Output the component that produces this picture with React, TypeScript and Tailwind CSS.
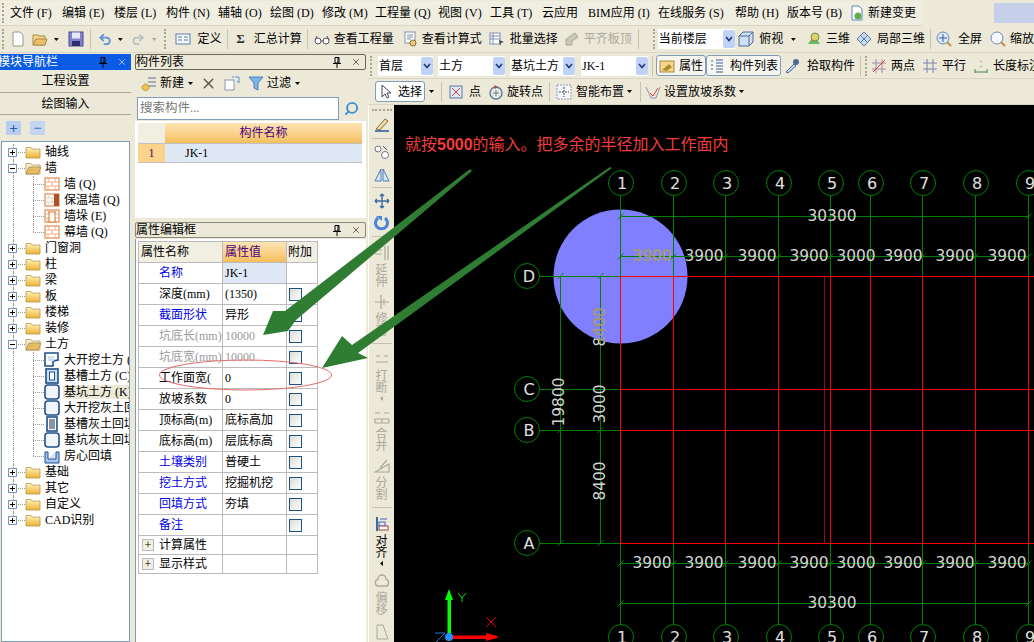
import type { ReactNode } from 'react';
import { Undo2, Redo2, Search, X } from 'lucide-react';

const GRID_X = [620, 673, 725, 778, 830, 870, 922, 975, 1028];
const GRID_Y = [
  { label: 'D', y: 276 },
  { label: 'C', y: 389 },
  { label: 'B', y: 430 },
  { label: 'A', y: 543 },
];
const DIM_X = [
  { t: '3900', x: 652 },
  { t: '3900', x: 704 },
  { t: '3900', x: 757 },
  { t: '3900', x: 809 },
  { t: '3000', x: 856 },
  { t: '3900', x: 903 },
  { t: '3900', x: 955 },
  { t: '3900', x: 1007 },
];

const PROPS = [
  { name: '名称', value: 'JK-1', blue: true, check: false, picked: true },
  { name: '深度(mm)', value: '(1350)', check: true },
  { name: '截面形状', value: '异形', blue: true, check: true },
  { name: '坑底长(mm)', value: '10000', gray: true, check: true },
  { name: '坑底宽(mm)', value: '10000', gray: true, check: true },
  { name: '工作面宽(', value: '0', check: true },
  { name: '放坡系数', value: '0', check: true },
  { name: '顶标高(m)', value: '底标高加', check: true },
  { name: '底标高(m)', value: '层底标高', check: true },
  { name: '土壤类别', value: '普硬土', blue: true, check: true },
  { name: '挖土方式', value: '挖掘机挖', blue: true, check: true },
  { name: '回填方式', value: '夯填', blue: true, check: true },
  { name: '备注', value: '', blue: true, check: true },
];

const MENUS = [
  ['文件 (F)', 'w-[52px]'],
  ['编辑 (E)', 'w-[52px]'],
  ['楼层 (L)', 'w-[52px]'],
  ['构件 (N)', 'w-[52px]'],
  ['辅轴 (O)', 'w-[52px]'],
  ['绘图 (D)', 'w-[52px]'],
  ['修改 (M)', 'w-[53px]'],
  ['工程量 (Q)', 'w-[63px]'],
  ['视图 (V)', 'w-[52px]'],
  ['工具 (T)', 'w-[52px]'],
  ['云应用', 'w-[46px]'],
  ['BIM应用 (I)', 'w-[70px]'],
  ['在线服务 (S)', 'w-[77px]'],
  ['帮助 (H)', 'w-[52px]'],
  ['版本号 (B)', 'w-[63px]'],
];

function Caret({ className = '', gray = false }: { className?: string; gray?: boolean }) {
  return (
    <svg width="5" height="3" viewBox="0 0 5 3" className={className}>
      <path d="M0 0H5L2.5 3Z" fill={gray ? '#aaa89c' : '#000'} />
    </svg>
  );
}

function Grip({ className = '' }: { className?: string }) {
  return <div className={`h-[20px] w-[2px] border-l-2 border-dotted border-[#a8a592] ${className}`} />;
}

function Sep({ className = '' }: { className?: string }) {
  return <div className={`h-[20px] w-[1px] bg-[#c5c2b0] ${className}`} />;
}

function HLine({ className = '' }: { className?: string }) {
  return <div className={`h-[1px] w-[20px] bg-[#c5c2b0] ${className}`} />;
}

function Label({ children, className = '' }: { children: ReactNode; className?: string }) {
  return <span className={`whitespace-nowrap ${className}`}>{children}</span>;
}

function Ico({ children, className = '' }: { children: ReactNode; className?: string }) {
  return (
    <svg width="16" height="16" viewBox="0 0 16 16" className={`shrink-0 ${className}`}>
      {children}
    </svg>
  );
}

function FolderIcon({ open = false }: { open?: boolean }) {
  return (
    <svg width="16" height="13" viewBox="0 0 16 13" className="shrink-0">
      <defs>
        <linearGradient id="folderFill" x1="0" y1="0" x2="0" y2="1">
          <stop offset="0" stopColor="#fff4c0" />
          <stop offset="1" stopColor="#eeb030" />
        </linearGradient>
      </defs>
      <path d="M1 3V1.5H6L7 3H15V12H1Z" fill={open ? '#f5efd8' : 'url(#folderFill)'} stroke="#b89a4c" strokeWidth="0.8" />
      {open && <path d="M1 12L4 5H16L13 12Z" fill="#e8bc60" stroke="#a88a4c" strokeWidth="0.8" />}
    </svg>
  );
}

function WallIcon({ kind = 0 }: { kind?: number }) {
  return (
    <Ico>
      <rect x="1" y="2" width="14" height="12" fill="#fff" stroke="#d9762c" />
      <path d="M1 6H15M1 10H15M5 2V6M11 2V6M8 6V10M4 10V14M11 10V14" stroke={kind === 1 ? '#e4c0b0' : '#eda070'} strokeWidth="0.8" />
      {kind === 1 && <rect x="10" y="2" width="5" height="12" fill="#b0502a" />}
      {kind === 2 && <rect x="5" y="4" width="6" height="10" fill="#fff" stroke="#d9762c" />}
    </Ico>
  );
}

function PitIcon({ kind }: { kind: number }) {
  return (
    <Ico>
      {kind === 0 && (
        <>
          <path d="M1 1H14V8L9 9V14H1Z" fill="#fff" stroke="#1d4f91" strokeWidth="1.6" />
          <rect x="4" y="4" width="6" height="5" fill="#cfe0f5" />
        </>
      )}
      {kind === 1 && (
        <>
          <rect x="2" y="1" width="12" height="14" fill="#cfe0f5" stroke="#1d4f91" strokeWidth="1.6" />
          <rect x="5.5" y="4" width="5" height="8" fill="#fff" stroke="#1d4f91" />
        </>
      )}
      {kind === 2 && <rect x="1" y="1" width="14" height="14" rx="3" fill="#f2f6fc" stroke="#1d4f91" strokeWidth="1.6" />}
      {kind === 3 && (
        <>
          <rect x="3" y="1" width="10" height="14" fill="#fff" stroke="#1d4f91" strokeWidth="1.6" />
          <rect x="5" y="3" width="6" height="10" fill="#8a94a8" />
        </>
      )}
      {kind === 4 && (
        <>
          <path d="M1 4H4V11H12V4H15V15H1Z" fill="#a9c4ec" stroke="#1d4f91" />
          <path d="M5 10L11 4V10Z" fill="#d8e4f5" />
        </>
      )}
    </Ico>
  );
}

function TreeBox({ minus = false }: { minus?: boolean }) {
  return (
    <div className="relative flex h-[9px] w-[9px] items-center justify-center border border-[#7a96b8] bg-white">
      <div className="h-[1px] w-[5px] bg-black" />
      {!minus && <div className="absolute h-[5px] w-[1px] bg-black" />}
    </div>
  );
}

function TreeFolder({ text, open = false, last = false }: { text: string; open?: boolean; last?: boolean }) {
  return (
    <div className="flex h-[16px] items-center">
      <div className="relative flex h-full w-[23px] shrink-0 items-center">
        <div className={`absolute left-[11px] top-0 border-l border-dotted border-[#999] ${last ? 'h-[8px]' : 'h-[16px]'}`} />
        <div className="absolute left-[16px] w-[7px] border-t border-dotted border-[#999]" />
        <div className="absolute left-[6px]">
          <TreeBox minus={open} />
        </div>
      </div>
      <FolderIcon open={open} />
      <Label className="ml-[4px]">{text}</Label>
    </div>
  );
}

function TreeLeaf({ text, icon, last = false, picked = false }: { text: string; icon: ReactNode; last?: boolean; picked?: boolean }) {
  return (
    <div className="flex h-[16px] items-center">
      <div className="relative h-full w-[42px] shrink-0">
        <div className="absolute left-[11px] top-0 h-[16px] border-l border-dotted border-[#999]" />
        <div className={`absolute left-[31px] top-0 border-l border-dotted border-[#999] ${last ? 'h-[8px]' : 'h-[16px]'}`} />
        <div className="absolute left-[31px] top-[8px] w-[11px] border-t border-dotted border-[#999]" />
      </div>
      {icon}
      <Label className={`ml-[3px] pl-[1px] pr-[20px] ${picked ? 'bg-[#ece9d8]' : ''}`}>{text}</Label>
    </div>
  );
}

function PanelControls() {
  return (
    <div className="ml-auto flex items-center gap-[9px]">
      <svg width="10" height="11" viewBox="0 0 10 11">
        <path d="M3 .5H7V6H3ZM6 .5V6M1 6.5H9M5 7V11" stroke="#000" fill="none" />
      </svg>
      <X size={10} strokeWidth={1.4} />
    </div>
  );
}

function Select({ text, className }: { text: string; className: string }) {
  return (
    <div className={`flex h-[20px] items-center justify-between bg-white pl-[1px] ${className}`}>
      <Label>{text}</Label>
      <div className="flex h-[18px] w-[12px] items-center justify-center rounded-[2px] bg-[#c0d2f7]">
        <svg width="8" height="6" viewBox="0 0 8 6">
          <path d="M1 1L4 4.5L7 1" stroke="#1c3c78" strokeWidth="1.6" fill="none" />
        </svg>
      </div>
    </div>
  );
}

function VertTool({ icon, text, gray = true, caret = false, className = '' }: { icon: ReactNode; text?: string; gray?: boolean; caret?: boolean; className?: string }) {
  return (
    <div className={`flex flex-col items-center ${className}`}>
      {icon}
      {text && (
        <div className={`mt-[3px] flex flex-col text-[12px] leading-[12px] ${gray ? 'text-[#aaa89c]' : 'text-black'}`}>
          {text.split('').map((c) => (
            <span key={c}>{c}</span>
          ))}
        </div>
      )}
      {caret && <Caret className="mt-[3px] rotate-90" gray={gray} />}
    </div>
  );
}

function Canvas() {
  const txt = { fontFamily: 'DejaVu Sans, sans-serif', fontSize: 15.4 };
  return (
    <svg width="640" height="537" viewBox="394 105 640 537" className="block bg-black">
      <defs>
        <clipPath id="spot">
          <circle cx="620.5" cy="276.5" r="67" />
        </clipPath>
      </defs>
      <circle cx="620.5" cy="276.5" r="67" fill="#8080ff" />

      {/* axis lines */}
      {GRID_X.map((x) => (
        <g key={x}>
          <line x1={x + 0.5} y1={196} x2={x + 0.5} y2={276} stroke="#008000" />
          <line x1={x + 0.5} y1={543} x2={x + 0.5} y2={624} stroke="#008000" />
          <line x1={x + 0.5} y1={276} x2={x + 0.5} y2={543} stroke="#ff0000" />
        </g>
      ))}
      <line x1="824.5" y1="276" x2="824.5" y2="543" stroke="#8a1010" />
      {GRID_Y.map(({ y }) => (
        <g key={y}>
          <line x1="540" y1={y + 0.5} x2="620" y2={y + 0.5} stroke="#008000" />
          <line x1="620" y1={y + 0.5} x2="1034" y2={y + 0.5} stroke="#ff0000" />
        </g>
      ))}

      {/* dimension lines */}
      {[560.5, 600.5].map((x) => (
        <g key={x} stroke="#008000">
          <line x1={x} y1="276" x2={x} y2="543" />
          <path d={`M${x - 3} 279L${x + 3} 273M${x - 3} 546L${x + 3} 540M${x - 3} 433L${x + 3} 427`} />
        </g>
      ))}
      {[216.5, 256.5, 563.5, 603.5].map((y) => (
        <g key={y} stroke="#008000">
          <line x1="620" y1={y} x2="1028" y2={y} />
          {(y === 216.5 || y === 603.5 ? [620.5, 1028.5] : GRID_X.map((x) => x + 0.5)).map((x) => (
            <path key={x} d={`M${x - 3} ${y + 3}L${x + 3} ${y - 3}`} />
          ))}
        </g>
      ))}

      {/* numbers */}
      <g fill="#d4d4d4" style={txt} textAnchor="middle" dominantBaseline="central">
        {DIM_X.map((d) => (
          <g key={d.x}>
            <text x={d.x} y={256}>{d.t}</text>
            <text x={d.x} y={563}>{d.t}</text>
          </g>
        ))}
        <text x="832" y="216">30300</text>
        <text x="832" y="603">30300</text>
        <text transform="translate(559 402) rotate(-90)">19800</text>
        <text transform="translate(600 404) rotate(-90)">3000</text>
        <text transform="translate(600 481) rotate(-90)">8400</text>
        <text transform="translate(600 327) rotate(-90)">8400</text>
      </g>
      <g fill="#98905c" style={txt} textAnchor="middle" dominantBaseline="central" clipPath="url(#spot)">
        <text x={652} y={256}>3900</text>
        <text transform="translate(600 327) rotate(-90)">8400</text>
      </g>

      {/* axis bubbles */}
      {GRID_X.map((x, i) => (
        <g key={x}>
          <circle cx={x + 1} cy="183" r="12.5" fill="none" stroke="#008000" />
          <circle cx={x + 1} cy="637" r="12.5" fill="none" stroke="#008000" />
          <g fill="#e0e0e0" style={{ fontFamily: 'DejaVu Sans, sans-serif', fontSize: 16 }} textAnchor="middle" dominantBaseline="central">
            <text x={x + 2} y="183">{i + 1}</text>
            <text x={x + 2} y="637">{i + 1}</text>
          </g>
        </g>
      ))}
      {GRID_Y.map(({ label, y }) => (
        <g key={label}>
          <circle cx="527" cy={y} r="12.5" fill="none" stroke="#008000" />
          <text x="529" y={y} fill="#e0e0e0" style={{ fontFamily: 'DejaVu Sans, sans-serif', fontSize: 16 }} textAnchor="middle" dominantBaseline="central">
            {label}
          </text>
        </g>
      ))}

      {/* coordinate gizmo */}
      <path d="M447.5 637V600H445L449 589L453 600H451V637Z" fill="#00ff00" />
      <path d="M449 635.5H486V633L497 636L498 637L497 638L486 641V639H449Z" fill="#ff0000" />
      <circle cx="449" cy="637" r="4" fill="#1e90ff" />
      <path d="M458 593L462 598L466 593M462 598V602" stroke="#00e000" fill="none" />
      <path d="M486 617L496 627M496 617L486 627" stroke="#e00000" fill="none" />
      <path d="M435 633H445L436 642" stroke="#1e78e0" fill="none" />
    </svg>
  );
}

export default function App() {
  return (
    <div className="relative h-[642px] w-[1034px] overflow-hidden bg-[#ece9d8] font-['Liberation_Serif','Noto_Sans_CJK_SC',sans-serif] text-[12px] leading-[14px] text-black">
      {/* menu bar */}
      <div className="flex h-[26px] items-center">
        <div className="flex h-[25px] w-[922px] items-center border-b border-[#d8d5c4] bg-[#f0eee0] pl-[2px]">
          <Grip />
          <div className="ml-[6px] flex">
            {MENUS.map(([m, w]) => (
              <Label key={m} className={w}>{m}</Label>
            ))}
          </div>
          <Ico className="ml-[-1px]">
            <path d="M3 1H10L13 4V15H3Z" fill="#fff" stroke="#5a86c0" />
            <circle cx="9" cy="11" r="3.5" fill="#5cb04a" />
          </Ico>
          <Label className="ml-[3px]">新建变更</Label>
        </div>
        <div className="ml-auto mr-0 h-[20px] w-[40px] bg-[#c6cfea]" />
      </div>

      {/* standard toolbar */}
      <div className="flex h-[27px] items-center border-b border-[#d8d5c4] pl-[2px]">
        <Grip />
        <Ico className="ml-[6px]">
          <path d="M3 1H10L13 4V15H3Z" fill="#fff" stroke="#9a9a8c" />
        </Ico>
        <Ico className="ml-[6px]">
          <path d="M1 14V4H6L7 5H13V14Z" fill="#f4d68a" stroke="#a88a4c" />
          <path d="M1 14L4 8H15L13 14Z" fill="#ecc066" stroke="#a88a4c" />
        </Ico>
        <Caret className="ml-[6px]" />
        <Ico className="ml-[9px]">
          <rect x="1" y="1" width="14" height="14" fill="#7f82c8" stroke="#4c4f94" />
          <rect x="4" y="1.5" width="8" height="6" fill="#e8e8f4" />
          <rect x="4" y="10" width="8" height="5" fill="#2c2f6c" />
        </Ico>
        <Sep className="ml-[6px]" />
        <Undo2 size={15} strokeWidth={3} className="ml-[7px] text-[#5c8fd6]" />
        <Caret className="ml-[6px]" />
        <Redo2 size={15} strokeWidth={3} className="ml-[8px] text-[#b8c0c0]" />
        <Caret gray className="ml-[7px]" />
        <Grip className="ml-[8px]" />
        <Ico className="ml-[9px]">
          <rect x="1" y="3" width="14" height="10" fill="#f4f7fc" stroke="#5a7aa8" />
          <path d="M3 6H7M3 9H7M9 6H13M9 9H13" stroke="#5a7aa8" />
        </Ico>
        <Label className="ml-[6px]">定义</Label>
        <Sep className="ml-[6px]" />
        <span className="ml-[8px] w-[10px] text-[13px] font-bold text-[#333]">Σ</span>
        <Label className="ml-[8px]">汇总计算</Label>
        <Sep className="ml-[5px]" />
        <Ico className="ml-[6px]">
          <circle cx="4" cy="10" r="3" fill="#fff" stroke="#555" />
          <circle cx="12" cy="10" r="3" fill="#fff" stroke="#555" />
          <path d="M7 10H9M1 9L3 5M15 9L13 5" stroke="#555" fill="none" />
        </Ico>
        <Label className="ml-[4px]">查看工程量</Label>
        <Ico className="ml-[8px]">
          <rect x="3" y="1" width="10" height="11" fill="#fff" stroke="#8090a8" />
          <path d="M5 4H11M5 6H11M5 8H9" stroke="#8090a8" />
          <circle cx="11" cy="12" r="3" fill="#e8d080" stroke="#8a7030" />
        </Ico>
        <Label className="ml-[4px]">查看计算式</Label>
        <Ico className="ml-[7px]">
          <rect x="1" y="2" width="10" height="11" fill="#fff" stroke="#7f8db0" />
          <path d="M1 5H11M1 8H11M4 2V13" stroke="#7f8db0" />
          <path d="M10 9L15 11L12 12L11 15Z" fill="#445" />
        </Ico>
        <Label className="ml-[5px]">批量选择</Label>
        <Ico className="ml-[6px]">
          <path d="M2 14V8L11 2L14 6L8 10V14Z" fill="#c8c6b8" stroke="#aaa89c" />
        </Ico>
        <Label className="ml-[4px] text-[#aaa89c]">平齐板顶</Label>
        <Sep className="ml-[6px]" />
        <Grip className="ml-[14px]" />
        <Select text="当前楼层" className="ml-[3px] w-[82px]" />
        <Ico className="ml-[3px]">
          <path d="M1 5L5 1H15V11L11 15H1Z" fill="#cfe0f4" stroke="#4a6a94" />
          <path d="M1 5H11V15M11 5L15 1" stroke="#4a6a94" fill="none" />
        </Ico>
        <Label className="ml-[5px]">俯视</Label>
        <Caret className="ml-[8px]" />
        <Ico className="ml-[10px]">
          <path d="M2 13L8 4L14 13Z" fill="#6cb860" />
          <circle cx="9" cy="6" r="4" fill="#e0d070" stroke="#7a8a50" />
        </Ico>
        <Label className="ml-[4px]">三维</Label>
        <Ico className="ml-[6px]">
          <path d="M8 1L15 8L8 15L1 8Z" fill="#c6d8f0" stroke="#5a7aa8" />
          <path d="M5 5L11 11M11 5L5 11" stroke="#5a7aa8" />
        </Ico>
        <Label className="ml-[5px]">局部三维</Label>
        <Sep className="ml-[5px]" />
        <Ico className="ml-[5px]">
          <circle cx="7" cy="7" r="6" fill="#dbe7f7" stroke="#6a8ab8" />
          <path d="M7 3V11M3 7H11" stroke="#3a5a94" />
          <path d="M11 11L15 15" stroke="#c09040" strokeWidth="2" />
        </Ico>
        <Label className="ml-[6px]">全屏</Label>
        <Ico className="ml-[8px]">
          <circle cx="7" cy="7" r="6" fill="#f4f7fc" stroke="#6a8ab8" />
          <path d="M11 11L15 15" stroke="#c09040" strokeWidth="2" />
        </Ico>
        <Label className="ml-[4px]">缩放</Label>
      </div>

      <div className="flex h-[589px]">
        {/* module navigator */}
        <div className="flex w-[131px] shrink-0 flex-col">
          <div className="mt-[1px] flex h-[16px] shrink-0 items-center bg-[#0a5ce6] pr-[4px] text-white">
            <span className="ml-[-2px] whitespace-nowrap text-[12px]">模块导航栏</span>
            <PanelControls />
          </div>
          <div className="flex h-[23px] shrink-0 items-center justify-center border-b border-[#aca899]">工程设置</div>
          <div className="flex h-[22px] shrink-0 items-center justify-center border-b border-[#aca899]">绘图输入</div>
          <div className="flex h-[26px] shrink-0 items-center gap-[9px] pl-[6px]">
            <div className="flex h-[14px] w-[15px] items-center justify-center bg-[#b9cdf0] text-[15px] font-bold text-[#1f5fb4]">+</div>
            <div className="flex h-[14px] w-[15px] items-center justify-center bg-[#c5d5f0] text-[15px] font-bold text-[#4d7dbd]">−</div>
          </div>
          <div className="ml-[1px] mr-[1px] flex-1 overflow-hidden border border-[#7f9db9] bg-white pt-[2px]">
            <TreeFolder text="轴线" />
            <TreeFolder text="墙" open />
            <TreeLeaf text="墙 (Q)" icon={<WallIcon />} />
            <TreeLeaf text="保温墙 (Q)" icon={<WallIcon kind={1} />} />
            <TreeLeaf text="墙垛 (E)" icon={<WallIcon kind={2} />} />
            <TreeLeaf text="幕墙 (Q)" icon={<WallIcon />} last />
            <TreeFolder text="门窗洞" />
            <TreeFolder text="柱" />
            <TreeFolder text="梁" />
            <TreeFolder text="板" />
            <TreeFolder text="楼梯" />
            <TreeFolder text="装修" />
            <TreeFolder text="土方" open />
            <TreeLeaf text="大开挖土方 (W)" icon={<PitIcon kind={0} />} />
            <TreeLeaf text="基槽土方 (C)" icon={<PitIcon kind={1} />} />
            <TreeLeaf text="基坑土方 (K)" icon={<PitIcon kind={2} />} picked />
            <TreeLeaf text="大开挖灰土回填" icon={<PitIcon kind={2} />} />
            <TreeLeaf text="基槽灰土回填" icon={<PitIcon kind={3} />} />
            <TreeLeaf text="基坑灰土回填" icon={<PitIcon kind={2} />} />
            <TreeLeaf text="房心回填" icon={<PitIcon kind={4} />} last />
            <TreeFolder text="基础" />
            <TreeFolder text="其它" />
            <TreeFolder text="自定义" />
            <TreeFolder text="CAD识别" last />
          </div>
        </div>

        {/* component list + property editor */}
        <div className="ml-[4px] flex w-[231px] shrink-0 flex-col">
          <div className="mt-[1px] flex h-[16px] shrink-0 items-center rounded-[2px] border border-[#66665a] pr-[4px]">
            <span className="whitespace-nowrap">构件列表</span>
            <PanelControls />
          </div>
          <div className="flex h-[26px] shrink-0 items-center pl-[6px]">
            <Ico>
              <path d="M7 3H15M7 7H15M7 11H15" stroke="#5a6a8a" />
              <path d="M3 9H6V11H8V14H6V16H3V14H1V11H3Z" fill="#f0c850" stroke="#b08a30" strokeWidth="0.6" />
            </Ico>
            <Label className="ml-[3px]">新建</Label>
            <Caret className="ml-[4px]" />
            <X size={17} strokeWidth={2} className="ml-[7px] text-[#55554c]" />
            <Ico className="ml-[7px]">
              <rect x="1" y="5" width="9" height="10" fill="#fff" stroke="#8a98b0" />
              <path d="M11 2H15V8M15 8L13 6M8 2H10" stroke="#5c8fd6" fill="none" />
            </Ico>
            <Ico className="ml-[8px]">
              <path d="M1 2H15L10 8V15L6 13V8Z" fill="#7fb4e6" stroke="#4a80bc" />
            </Ico>
            <Label className="ml-[3px]">过滤</Label>
            <Caret className="ml-[4px]" />
          </div>
          <div className="flex h-[24px] shrink-0 items-center pl-[2px]">
            <div className="flex h-[23px] w-[202px] items-center border border-[#7f9db9] bg-white pl-[2px] text-[12.5px] text-[#777]">搜索构件...</div>
            <Search size={15} strokeWidth={3} className="ml-[5px] -scale-x-100 text-[#3a8fd6]" />
          </div>
          <div className="mt-[1px] h-[97px] shrink-0 bg-white pl-[3px] pr-[4px] pt-[2px]">
            <div className="flex h-[21px] border-b border-[#c0c0c0]">
              <div className="w-[27px] bg-[#f1efe2]" />
              <div className="flex flex-1 items-center justify-center bg-linear-to-b from-[#fde4b4] to-[#f5c05c] text-[#4b0082]">构件名称</div>
            </div>
            <div className="flex h-[19px] border-b border-[#c0c0c0]">
              <div className="flex w-[27px] items-center justify-center bg-[#fdd28a] text-[#4b0082]">1</div>
              <div className="flex flex-1 items-center bg-[#dfe8f5] pl-[20px]">JK-1</div>
            </div>
          </div>
          <div className="mt-[4px] flex h-[16px] shrink-0 items-center rounded-[2px] border border-[#8a8a7c] pr-[4px]">
            <span className="whitespace-nowrap">属性编辑框</span>
            <PanelControls />
          </div>
          <div className="mt-[1px] flex-1 border-l border-[#7f9db9] bg-white pl-[2px] pt-[2px]">
            <div className="w-[180px] border-l border-t border-[#bbb]">
              <div className="flex h-[21px] border-b border-[#bbb]">
                <div className="flex w-[84px] items-center border-r border-[#bbb] bg-[#f1efe2] pl-[2px]">属性名称</div>
                <div className="flex w-[64px] items-center border-r border-[#bbb] bg-linear-to-b from-[#fde4b4] to-[#f5c05c] pl-[2px] text-[#4b0082]">属性值</div>
                <div className="flex w-[31px] items-center border-r border-[#bbb] bg-[#f1efe2] pl-[1px]">附加</div>
              </div>
              {PROPS.map((p) => (
                <div key={p.name} className="flex h-[21px] border-b border-[#bbb]">
                  <div className={`flex w-[84px] items-center overflow-hidden whitespace-nowrap border-r border-[#bbb] pl-[20px] ${p.blue ? 'text-[#0000e6]' : p.gray ? 'text-[#9a9a9a]' : ''}`}>{p.name}</div>
                  <div className={`flex w-[64px] items-center overflow-hidden whitespace-nowrap border-r border-[#bbb] pl-[2px] ${p.picked ? 'bg-[#dfe8f5]' : ''} ${p.gray ? 'text-[#9a9a9a]' : ''}`}>{p.value}</div>
                  <div className="flex w-[31px] items-center border-r border-[#bbb] pl-[2px]">
                    {p.check && <div className="h-[13px] w-[13px] border border-[#1c5180] bg-linear-to-br from-[#dcdcd6] to-white" />}
                  </div>
                </div>
              ))}
              {['计算属性', '显示样式'].map((s) => (
                <div key={s} className="flex h-[19px] border-b border-[#bbb]">
                  <div className="flex w-[84px] items-center border-r border-[#bbb] pl-[3px]">
                    <div className="flex h-[12px] w-[12px] items-center justify-center border border-[#bbb] bg-[#f1efe2] text-[12px] leading-none">+</div>
                    <span className="ml-[5px]">{s}</span>
                  </div>
                  <div className="w-[64px] border-r border-[#bbb]" />
                  <div className="w-[31px] border-r border-[#bbb]" />
                </div>
              ))}
            </div>
          </div>
        </div>

        {/* drawing side */}
        <div className="flex flex-1 flex-col pl-[1px]">
          <div className="flex h-[25px] shrink-0 items-center pl-[3px]">
            <Grip />
            <Select text="首层" className="ml-[6px] w-[55px]" />
            <Select text="土方" className="ml-[5px] w-[67px]" />
            <Select text="基坑土方" className="ml-[5px] w-[65px]" />
            <Select text="JK-1" className="ml-[6px] w-[67px]" />
            <Sep className="ml-[4px]" />
            <div className="ml-[3px] flex h-[21px] w-[50px] items-center rounded-[3px] border border-[#7f9db9] bg-[#f7f6ee] pl-[2px]">
              <Ico>
                <rect x="1" y="3" width="14" height="11" fill="#f4d68a" stroke="#a88a4c" />
                <path d="M3 12L10 6L13 9L8 13Z" fill="#b08a30" />
              </Ico>
              <Label className="ml-[4px]">属性</Label>
            </div>
            <div className="flex h-[21px] w-[75px] items-center rounded-[3px] border border-[#7f9db9] bg-[#f7f6ee] pl-[2px]">
              <Ico>
                <path d="M2 3H4M2 7H4M2 11H4M7 2H14M7 5H14M7 8H14M7 11H14M7 14H14" stroke="#3c5a94" />
              </Ico>
              <Label className="ml-[5px]">构件列表</Label>
            </div>
            <Ico className="ml-[3px]">
              <path d="M2 14L10 6L12 8L4 15Z" fill="#c5d8f2" stroke="#4a6a94" />
              <circle cx="12" cy="4" r="3" fill="#4a6a94" />
            </Ico>
            <Label className="ml-[7px]">拾取构件</Label>
            <Sep className="ml-[5px]" />
            <Grip className="ml-[4px]" />
            <Ico className="ml-[4px]">
              <path d="M1 5H15M1 11H15M5 1V15M11 1V15" stroke="#a08ab0" />
              <path d="M2 14L14 2" stroke="#e04030" />
            </Ico>
            <Label className="ml-[4px]">两点</Label>
            <Ico className="ml-[7px]">
              <path d="M1 5H15M1 11H15M5 1V15M11 1V15" stroke="#8080b0" />
            </Ico>
            <Label className="ml-[4px]">平行</Label>
            <Ico className="ml-[7px]">
              <path d="M2 14H14M2 11V15M14 11V15M8 8V9M8 3V4" stroke="#4a8a4a" />
            </Ico>
            <Label className="ml-[4px]">长度标注</Label>
          </div>
          <div className="flex h-[27px] shrink-0 items-center border-y border-[#d8d5c4] pl-[8px]">
            <div className="flex h-[21px] w-[50px] items-center rounded-[3px] border border-[#7f9db9] bg-white pl-[5px]">
              <svg width="11" height="15" viewBox="0 0 11 15">
                <path d="M1 1V13L4 10L6 14L8 13L6 9H10Z" fill="#fff" stroke="#445" />
              </svg>
              <Label className="ml-[6px]">选择</Label>
            </div>
            <Caret className="ml-[4px]" />
            <Sep className="ml-[7px]" />
            <Ico className="ml-[6px]">
              <rect x="2" y="2" width="12" height="12" fill="#dfe8f5" stroke="#5a7aa8" />
              <path d="M4 4L12 12M12 4L4 12" stroke="#c04040" />
            </Ico>
            <Label className="ml-[5px]">点</Label>
            <Ico className="ml-[7px]">
              <circle cx="8" cy="9" r="6" fill="none" stroke="#5a7aa8" strokeWidth="1.4" />
              <path d="M8 6V12M5 9H11" stroke="#5a7aa8" />
              <path d="M6 1L10 3L7 5Z" fill="#c04040" />
            </Ico>
            <Label className="ml-[3px]">旋转点</Label>
            <Sep className="ml-[6px]" />
            <Ico className="ml-[6px]">
              <rect x="1" y="1" width="14" height="14" fill="#f4f7fc" stroke="#8a9ab0" strokeDasharray="2 1" />
              <path d="M8 3V13M3 8H13" stroke="#445" strokeDasharray="2 1" />
            </Ico>
            <Label className="ml-[4px]">智能布置</Label>
            <Caret className="ml-[3px]" />
            <Sep className="ml-[8px]" />
            <Ico className="ml-[4px]">
              <path d="M1 3L6 14H11L15 3" fill="none" stroke="#8a98b0" />
              <path d="M5 9L8 12L13 4" fill="none" stroke="#e04030" />
            </Ico>
            <Label className="ml-[3px]">设置放坡系数</Label>
            <Caret className="ml-[3px]" />
          </div>
          <div className="flex flex-1">
            {/* vertical edit toolbar */}
            <div className="ml-[1px] flex w-[26px] shrink-0 flex-col items-center overflow-hidden border-l border-white pt-[4px] text-center">
              <div className="h-[2px] w-[20px] shrink-0 border-t-2 border-dotted border-[#a8a592]" />
              <VertTool
                className="mt-[5px]"
                icon={
                  <Ico>
                    <path d="M2 13L11 3L14 5L6 14Z" fill="#e8d8a0" stroke="#8a7040" />
                    <path d="M1 15H15" stroke="#5a7aa8" strokeWidth="2" />
                  </Ico>
                }
              />
              <HLine className="mt-[6px]" />
              <VertTool
                className="mt-[5px]"
                icon={
                  <Ico>
                    <circle cx="4" cy="5" r="3" fill="#fff" stroke="#778" />
                    <circle cx="11" cy="11" r="3.5" fill="#fff" stroke="#778" />
                    <path d="M9 2L13 6" stroke="#3c5a94" />
                  </Ico>
                }
              />
              <VertTool
                className="mt-[7px]"
                icon={
                  <Ico>
                    <path d="M7 2V14H1ZM9 2V14H15Z" fill="#dbe7f7" stroke="#4a7ab8" />
                  </Ico>
                }
              />
              <HLine className="mt-[4px]" />
              <VertTool
                className="mt-[5px]"
                icon={
                  <Ico>
                    <path d="M8 1V15M1 8H15M8 1L6 3M8 1L10 3M8 15L6 13M8 15L10 13M1 8L3 6M1 8L3 10M15 8L13 6M15 8L13 10" stroke="#3c6a9c" strokeWidth="1.4" fill="none" />
                  </Ico>
                }
              />
              <VertTool
                className="mt-[6px]"
                icon={
                  <Ico>
                    <path d="M4 3A6 6 0 1 0 11 3" fill="none" stroke="#4a84d6" strokeWidth="3" />
                    <path d="M2 1H8V6Z" fill="#4a84d6" />
                  </Ico>
                }
              />
              <HLine className="mt-[5px]" />
              <VertTool
                className="mt-[8px]"
                text="延伸"
                icon={
                  <Ico>
                    <path d="M1 5H8M1 9H8M11 1V15M14 1V15" stroke="#aaa89c" strokeWidth="1.2" />
                  </Ico>
                }
              />
              <VertTool
                className="mt-[6px]"
                text="修剪"
                icon={
                  <Ico>
                    <path d="M1 8H15M7 1V15" stroke="#aaa89c" strokeWidth="1.2" />
                    <path d="M10 5V11" stroke="#aaa89c" />
                  </Ico>
                }
              />
              <HLine className="mt-[6px]" />
              <VertTool
                className="mt-[7px]"
                text="打断"
                caret
                icon={
                  <Ico>
                    <path d="M2 5H6M10 5H14M2 11H14" stroke="#aaa89c" strokeWidth="1.2" />
                  </Ico>
                }
              />
              <VertTool
                className="mt-[9px]"
                text="合并"
                icon={
                  <Ico>
                    <path d="M1 4H6M10 4H15M1 10H15M1 14H15M1 10V14M8 10V14M15 10V14" stroke="#aaa89c" strokeWidth="1.2" />
                  </Ico>
                }
              />
              <VertTool
                className="mt-[6px]"
                text="分割"
                icon={
                  <Ico>
                    <path d="M1 14H15V6L1 14ZM6 10L13 2" stroke="#aaa89c" strokeWidth="1.2" fill="none" />
                  </Ico>
                }
              />
              <HLine className="mt-[6px]" />
              <VertTool
                className="mt-[8px]"
                text="对齐"
                gray={false}
                caret
                icon={
                  <Ico>
                    <rect x="2" y="1" width="2" height="14" fill="#3c6a9c" />
                    <rect x="5" y="6" width="6" height="4" fill="#dfe8f5" stroke="#4a60c0" />
                    <rect x="5" y="10" width="9" height="4" fill="#fff" stroke="#a04040" />
                    <path d="M6 3H13" stroke="#4a60c0" />
                  </Ico>
                }
              />
              <VertTool
                className="mt-[8px]"
                text="偏移"
                icon={
                  <Ico>
                    <path d="M3 13A4 4 0 0 1 4 6A4 4 0 0 1 12 6A4 4 0 0 1 13 13Z" fill="none" stroke="#aaa89c" strokeWidth="1.4" />
                  </Ico>
                }
              />
              <VertTool
                className="mt-[8px]"
                icon={
                  <Ico>
                    <path d="M3 1H9L14 15H3Z" fill="none" stroke="#aaa89c" />
                  </Ico>
                }
              />
            </div>
            <Canvas />
          </div>
        </div>
      </div>

      {/* hand-drawn annotation layer */}
      <span className="absolute left-[405px] top-[136px] whitespace-nowrap font-['Liberation_Sans','Noto_Sans_CJK_SC',sans-serif] text-[16px] leading-[18px] text-[#f23c3c]">
        就按<span className="font-bold">5000</span>的输入。把多余的半径加入工作面内
      </span>
      <svg width="1034" height="642" viewBox="0 0 1034 642" className="pointer-events-none absolute left-0 top-0">
        <path d="M470 169L472 171L296 320L288 331L263 335L273 311L285 311Z" fill="#2e7d32" />
        <path d="M610 167L612 168L358 353L368 358L322 368L342 336L352 345Z" fill="#2e7d32" />
        <ellipse cx="245.5" cy="375" rx="86" ry="15" fill="none" stroke="#e86a6a" />
      </svg>
    </div>
  );
}
